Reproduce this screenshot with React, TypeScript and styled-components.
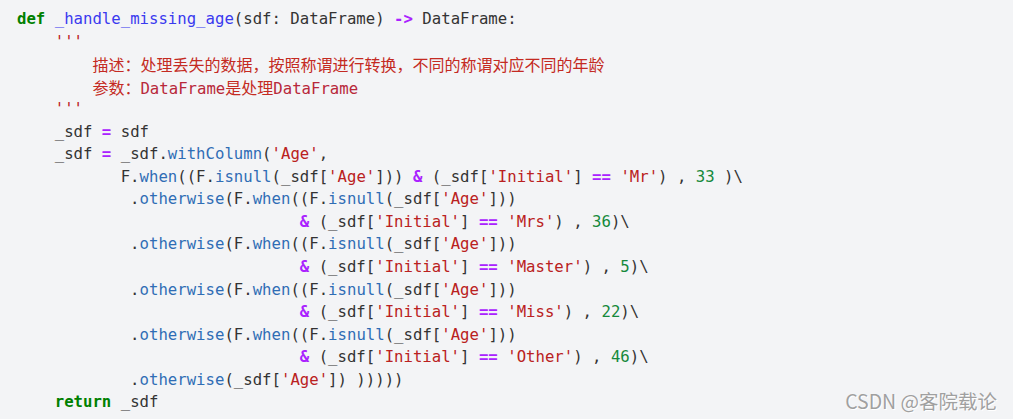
import React from "react";
import styled, { createGlobalStyle, css } from "styled-components";

const GlobalStyle = createGlobalStyle`
  html, body {
    margin: 0;
    padding: 0;
    background: #f3f4f6;
  }
  #root {
    width: 1013px;
    height: 419px;
  }
`;

const Page = styled.div`
  position: relative;
  width: 1013px;
  height: 419px;
  background: #f3f4f6;
  overflow: hidden;
`;

const CodeBlock = styled.pre`
  margin: 0;
  padding: 8px 0 0 17px;
  font-family: "DejaVu Sans Mono", "Liberation Mono", monospace;
  font-size: 15.67px;
  color: #333333;
  display: flex;
  flex-direction: column;
`;

const Line = styled.div`
  height: 22.55px;
  line-height: 22.55px;
  white-space: pre;
`;

type Kind = "p" | "k" | "f" | "s" | "o" | "m" | "n" | "c" | "cl";

const kindStyles: Record<Kind, ReturnType<typeof css>> = {
  p: css`color: #333333;`,
  k: css`color: #008000; font-weight: 700;`,
  f: css`color: #3a3aef;`,
  s: css`color: #ba2121;`,
  o: css`color: #aa22ff; font-weight: 700;`,
  m: css`color: #2f6db5;`,
  n: css`color: #15893b;`,
  c: css`
    color: #c42a22;
    font-family: "Noto Sans CJK SC", sans-serif;
    font-size: 16px;
  `,
  cl: css`
    color: #b8283a;
  `,
};

const Token = styled.span<{ $kind: Kind }>`
  ${(p) => kindStyles[p.$kind]}
`;

const Watermark = styled.div`
  position: absolute;
  right: 16px;
  bottom: 8px;
  font-family: "Noto Sans CJK SC", "Noto Sans", sans-serif;
  font-size: 19.5px;
  line-height: 20px;
  color: #a0a0a0;
  text-shadow: 0 0 1px #ffffff, 1px 1px 0 #ffffff;
  white-space: nowrap;
`;

type Tok = [Kind, string];

const IND30 = " ".repeat(30);

const condLine = (title: string, num: string): Tok[] => [
  ["p", IND30],
  ["o", "&"],
  ["p", " (_sdf["],
  ["s", "'Initial'"],
  ["p", "] "],
  ["o", "=="],
  ["p", " "],
  ["s", `'${title}'`],
  ["p", ") , "],
  ["n", num],
  ["p", ")\\"],
];

const otherwiseWhen: Tok[] = [
  ["p", "            ."],
  ["m", "otherwise"],
  ["p", "(F."],
  ["m", "when"],
  ["p", "((F."],
  ["m", "isnull"],
  ["p", "(_sdf["],
  ["s", "'Age'"],
  ["p", "]))"],
];

const lines: Tok[][] = [
  [
    ["k", "def"],
    ["p", " "],
    ["f", "_handle_missing_age"],
    ["p", "(sdf: DataFrame) "],
    ["o", "->"],
    ["p", " DataFrame:"],
  ],
  [
    ["p", "    "],
    ["s", "'''"],
  ],
  [
    ["p", "        "],
    ["c", "描述：处理丢失的数据，按照称谓进行转换，不同的称谓对应不同的年龄"],
  ],
  [
    ["p", "        "],
    ["c", "参数："],
    ["cl", "DataFrame"],
    ["c", "是处理"],
    ["cl", "DataFrame"],
  ],
  [
    ["p", "    "],
    ["s", "'''"],
  ],
  [
    ["p", "    _sdf "],
    ["o", "="],
    ["p", " sdf"],
  ],
  [
    ["p", "    _sdf "],
    ["o", "="],
    ["p", " _sdf."],
    ["m", "withColumn"],
    ["p", "("],
    ["s", "'Age'"],
    ["p", ","],
  ],
  [
    ["p", "           F."],
    ["m", "when"],
    ["p", "((F."],
    ["m", "isnull"],
    ["p", "(_sdf["],
    ["s", "'Age'"],
    ["p", "])) "],
    ["o", "&"],
    ["p", " (_sdf["],
    ["s", "'Initial'"],
    ["p", "] "],
    ["o", "=="],
    ["p", " "],
    ["s", "'Mr'"],
    ["p", ") , "],
    ["n", "33"],
    ["p", " )\\"],
  ],
  otherwiseWhen,
  condLine("Mrs", "36"),
  otherwiseWhen,
  condLine("Master", "5"),
  otherwiseWhen,
  condLine("Miss", "22"),
  otherwiseWhen,
  condLine("Other", "46"),
  [
    ["p", "            ."],
    ["m", "otherwise"],
    ["p", "(_sdf["],
    ["s", "'Age'"],
    ["p", "]) )))))"],
  ],
  [
    ["p", "    "],
    ["k", "return"],
    ["p", " _sdf"],
  ],
];

export default function App() {
  return (
    <Page>
      <GlobalStyle />
      <CodeBlock>
        {lines.map((line, i) => (
          <Line key={i}>
            {line.map(([kind, text], j) => (
              <Token key={j} $kind={kind}>
                {text}
              </Token>
            ))}
          </Line>
        ))}
      </CodeBlock>
      <Watermark>CSDN @客院载论</Watermark>
    </Page>
  );
}
